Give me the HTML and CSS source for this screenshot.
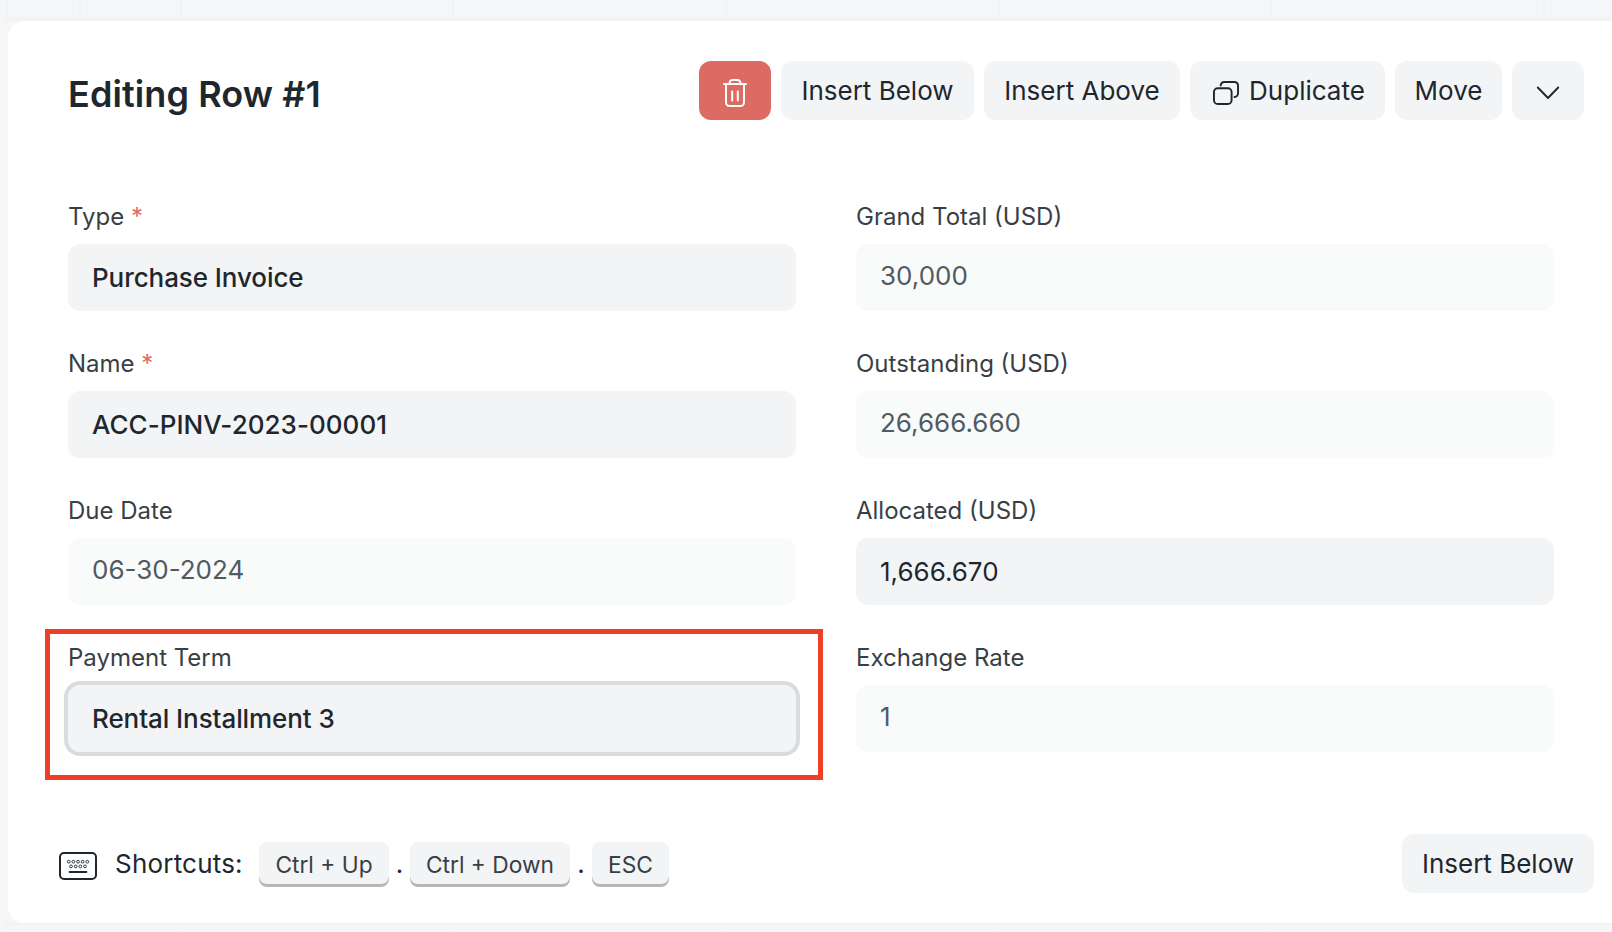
FILE: index.html
```html
<!DOCTYPE html>
<html lang="en">
<head>
<meta charset="utf-8">
<title>Editing Row #1</title>
<link rel="stylesheet" href="styles.css">
</head>
<body>
<div class="page">
  <div class="grid-strip grid-strip-top"><i></i><i></i><i></i><i></i><i></i><i></i><i></i></div>
  <main class="panel">
    <header class="toolbar">
      <h1 class="title">Editing Row #1</h1>
      <div class="actions">
        <button class="btn btn-danger btn-icon" aria-label="Delete">
          <svg class="ico-trash" width="24" height="28" viewBox="0 0 24 28" fill="none" stroke="#fff" stroke-width="2" stroke-linecap="round" stroke-linejoin="round"><path d="M1 5H23M3 5V23.500a3.500 3.500 0 0 0 3.500 3.500h11a3.500 3.500 0 0 0 3.500-3.500V5M6.500 4.500C6.500 2.200 7.600 1 9.800 1h4.400c2.200 0 3.300 1.200 3.300 3.500M9.200 12.500V21.500M14.800 12.500V21.500"/></svg>
        </button>
        <button class="btn btn-below">Insert Below</button>
        <button class="btn btn-above">Insert Above</button>
        <button class="btn btn-duplicate">
          <svg class="ico-dup" width="26" height="24" viewBox="0 0 27 24" preserveAspectRatio="none" fill="none" stroke="#1f272e" stroke-width="2" stroke-linecap="round"><rect x="1" y="7.300" width="18.300" height="15.700" rx="3.800"/><path d="M8 4.600V4.500A3.500 3.500 0 0 1 11.500 1H22.500A3.500 3.500 0 0 1 26 4.500V12.300A3.800 3.800 0 0 1 22.400 16.100"/></svg>
          <span>Duplicate</span>
        </button>
        <button class="btn btn-move">Move</button>
        <button class="btn btn-icon" aria-label="Collapse">
          <svg class="ico-chev" width="24" height="14" viewBox="0 0 24 14" fill="none" stroke="#1f272e" stroke-width="1.900" stroke-linecap="round" stroke-linejoin="round"><path d="M1.800 1.500L12 12L22.200 1.500"/></svg>
        </button>
      </div>
    </header>

    <section class="form">
      <div class="column">
        <div class="field"><label class="label">Type <span class="req">*</span></label><div class="control strong">Purchase Invoice</div></div>
        <div class="field"><label class="label">Name <span class="req">*</span></label><div class="control strong code">ACC-PINV-2023-00001</div></div>
        <div class="field"><label class="label">Due Date</label><div class="control readonly">06-30-2024</div></div>
        <div class="field highlighted"><label class="label">Payment Term</label><div class="control strong focused">Rental Installment 3</div></div>
      </div>
      <div class="column">
        <div class="field"><label class="label">Grand Total (USD)</label><div class="control readonly">30,000</div></div>
        <div class="field"><label class="label">Outstanding (USD)</label><div class="control readonly">26,666.660</div></div>
        <div class="field"><label class="label">Allocated (USD)</label><div class="control">1,666.670</div></div>
        <div class="field"><label class="label">Exchange Rate</label><div class="control readonly">1</div></div>
      </div>
    </section>

    <footer class="footer">
      <svg class="ico-kbd" width="38" height="28" viewBox="0 0 38 28" fill="none" stroke="#1f272e"><rect x="1" y="1" width="36" height="26" rx="4" stroke-width="2"/><g stroke-width="0.900"><circle cx="9.700" cy="9.700" r="1.400"/><circle cx="14.350" cy="9.700" r="1.400"/><circle cx="19" cy="9.700" r="1.400"/><circle cx="23.650" cy="9.700" r="1.400"/><circle cx="28.300" cy="9.700" r="1.400"/><circle cx="12" cy="14.400" r="1.400"/><circle cx="16.700" cy="14.400" r="1.400"/><circle cx="21.300" cy="14.400" r="1.400"/><circle cx="26" cy="14.400" r="1.400"/></g><path d="M10.600 20H27.400" stroke-width="2" stroke-linecap="round"/></svg>
      <span class="hint">Shortcuts:</span>
      <kbd class="key key-up">Ctrl + Up</kbd><span class="dot">.</span><kbd class="key key-down">Ctrl + Down</kbd><span class="dot">.</span><kbd class="key key-esc">ESC</kbd>
      <button class="btn btn-bottom">Insert Below</button>
    </footer>
  </main>
  <div class="grid-strip grid-strip-bottom"><i></i><i></i><i></i><i></i><i></i><i></i><i></i></div>
</div>
</body>
</html>
```
FILE: styles.css
```css
* { box-sizing: border-box; }

body {
  margin: 0;
  background: #f5f6f8;
  color: #1f272e;
  font-family: Inter, "Liberation Sans", sans-serif;
  font-size: 26px;
}

.page {
  width: 1612px;
  height: 932px;
  overflow: hidden;
  display: flex;
  flex-direction: column;
  padding-left: 6px;
}

/* Edges of the table behind the panel */
.grid-strip {
  display: grid;
  grid-template-columns: 73px 101px 272px 273px 273px 272px 273px;
  border-left: 2px solid #f2f3f5;
}
.grid-strip i { border-right: 2px solid #f2f3f5; }
.grid-strip-top { height: 21px; border-bottom: 4px solid #f2f3f5; }
.grid-strip-bottom { height: 9px; border-top: 2px solid #f2f3f5; }

.panel {
  height: 902px;
  margin-left: 2px;
  padding-top: 40px;
  background: #fff;
  border-radius: 16px 0 0 16px;
}

.toolbar {
  display: flex;
  justify-content: space-between;
  height: 59px;
  padding: 0 28px 0 60px;
}
.title {
  margin: 0;
  font-size: 36px;
  font-weight: 600;
  line-height: 66px;
  letter-spacing: 0.1px;
}
.actions { display: flex; gap: 10px; }

.btn {
  display: flex;
  align-items: center;
  justify-content: center;
  height: 59px;
  padding: 0;
  border: 0;
  border-radius: 12px;
  background: #f3f4f6;
  color: #1f272e;
  font: inherit;
  line-height: 59px;
  white-space: nowrap;
}
.btn-icon { width: 72px; }
.btn-danger { background: #db6b63; }
.btn-below { width: 193px; }
.btn-above { width: 196px; }
.btn-duplicate { width: 195px; gap: 10px; padding-left: 3px; }
.btn-move { width: 107px; }
.ico-trash,
.ico-dup,
.ico-chev { margin-top: 5px; }

.form {
  display: grid;
  grid-template-columns: 728px 698px;
  column-gap: 60px;
  padding: 81px 0 0 60px;
}
.column { display: flex; flex-direction: column; gap: 37px; }
.field { position: relative; height: 110px; }
.label {
  display: block;
  height: 30px;
  margin-bottom: 13px;
  color: #383f45;
  font-size: 24px;
  line-height: 32px;
}
.req { color: #e2695f; }
.control {
  height: 67px;
  padding: 0 24px;
  border-radius: 12px;
  background: #f3f4f6;
  line-height: 67px;
}
.strong { font-weight: 500; letter-spacing: -0.08px; }
.code { letter-spacing: 0.03px; }
.readonly { background: #f9fafa; color: #505a62; line-height: 63px; }
.focused { box-shadow: 0 0 0 4px #d9dbdd; }

/* Callout frame around the payment term */
.highlighted::after {
  content: "";
  position: absolute;
  inset: -13px -27px -28px -23px;
  border: 5px solid #ee4026;
}

.footer {
  display: flex;
  align-items: flex-start;
  padding: 82px 18px 0 51px;
}
.ico-kbd { margin-top: 18px; }
.hint { width: 144px; margin-left: 18px; line-height: 59px; letter-spacing: 0.2px; }
.key {
  height: 42px;
  margin-top: 8px;
  border-radius: 8px;
  background: #f3f4f6;
  box-shadow: 0 3px 0 #b5b7b8;
  color: #383f45;
  font: inherit;
  font-size: 22.75px;
  line-height: 46px;
  text-align: center;
}
.key-up { width: 130px; }
.key-down { width: 160px; }
.key-esc { width: 77px; }
.dot { width: 21px; line-height: 59px; text-align: center; }
.key-down + .dot { width: 22px; }
.btn-bottom { width: 192px; margin-left: auto; }
```
